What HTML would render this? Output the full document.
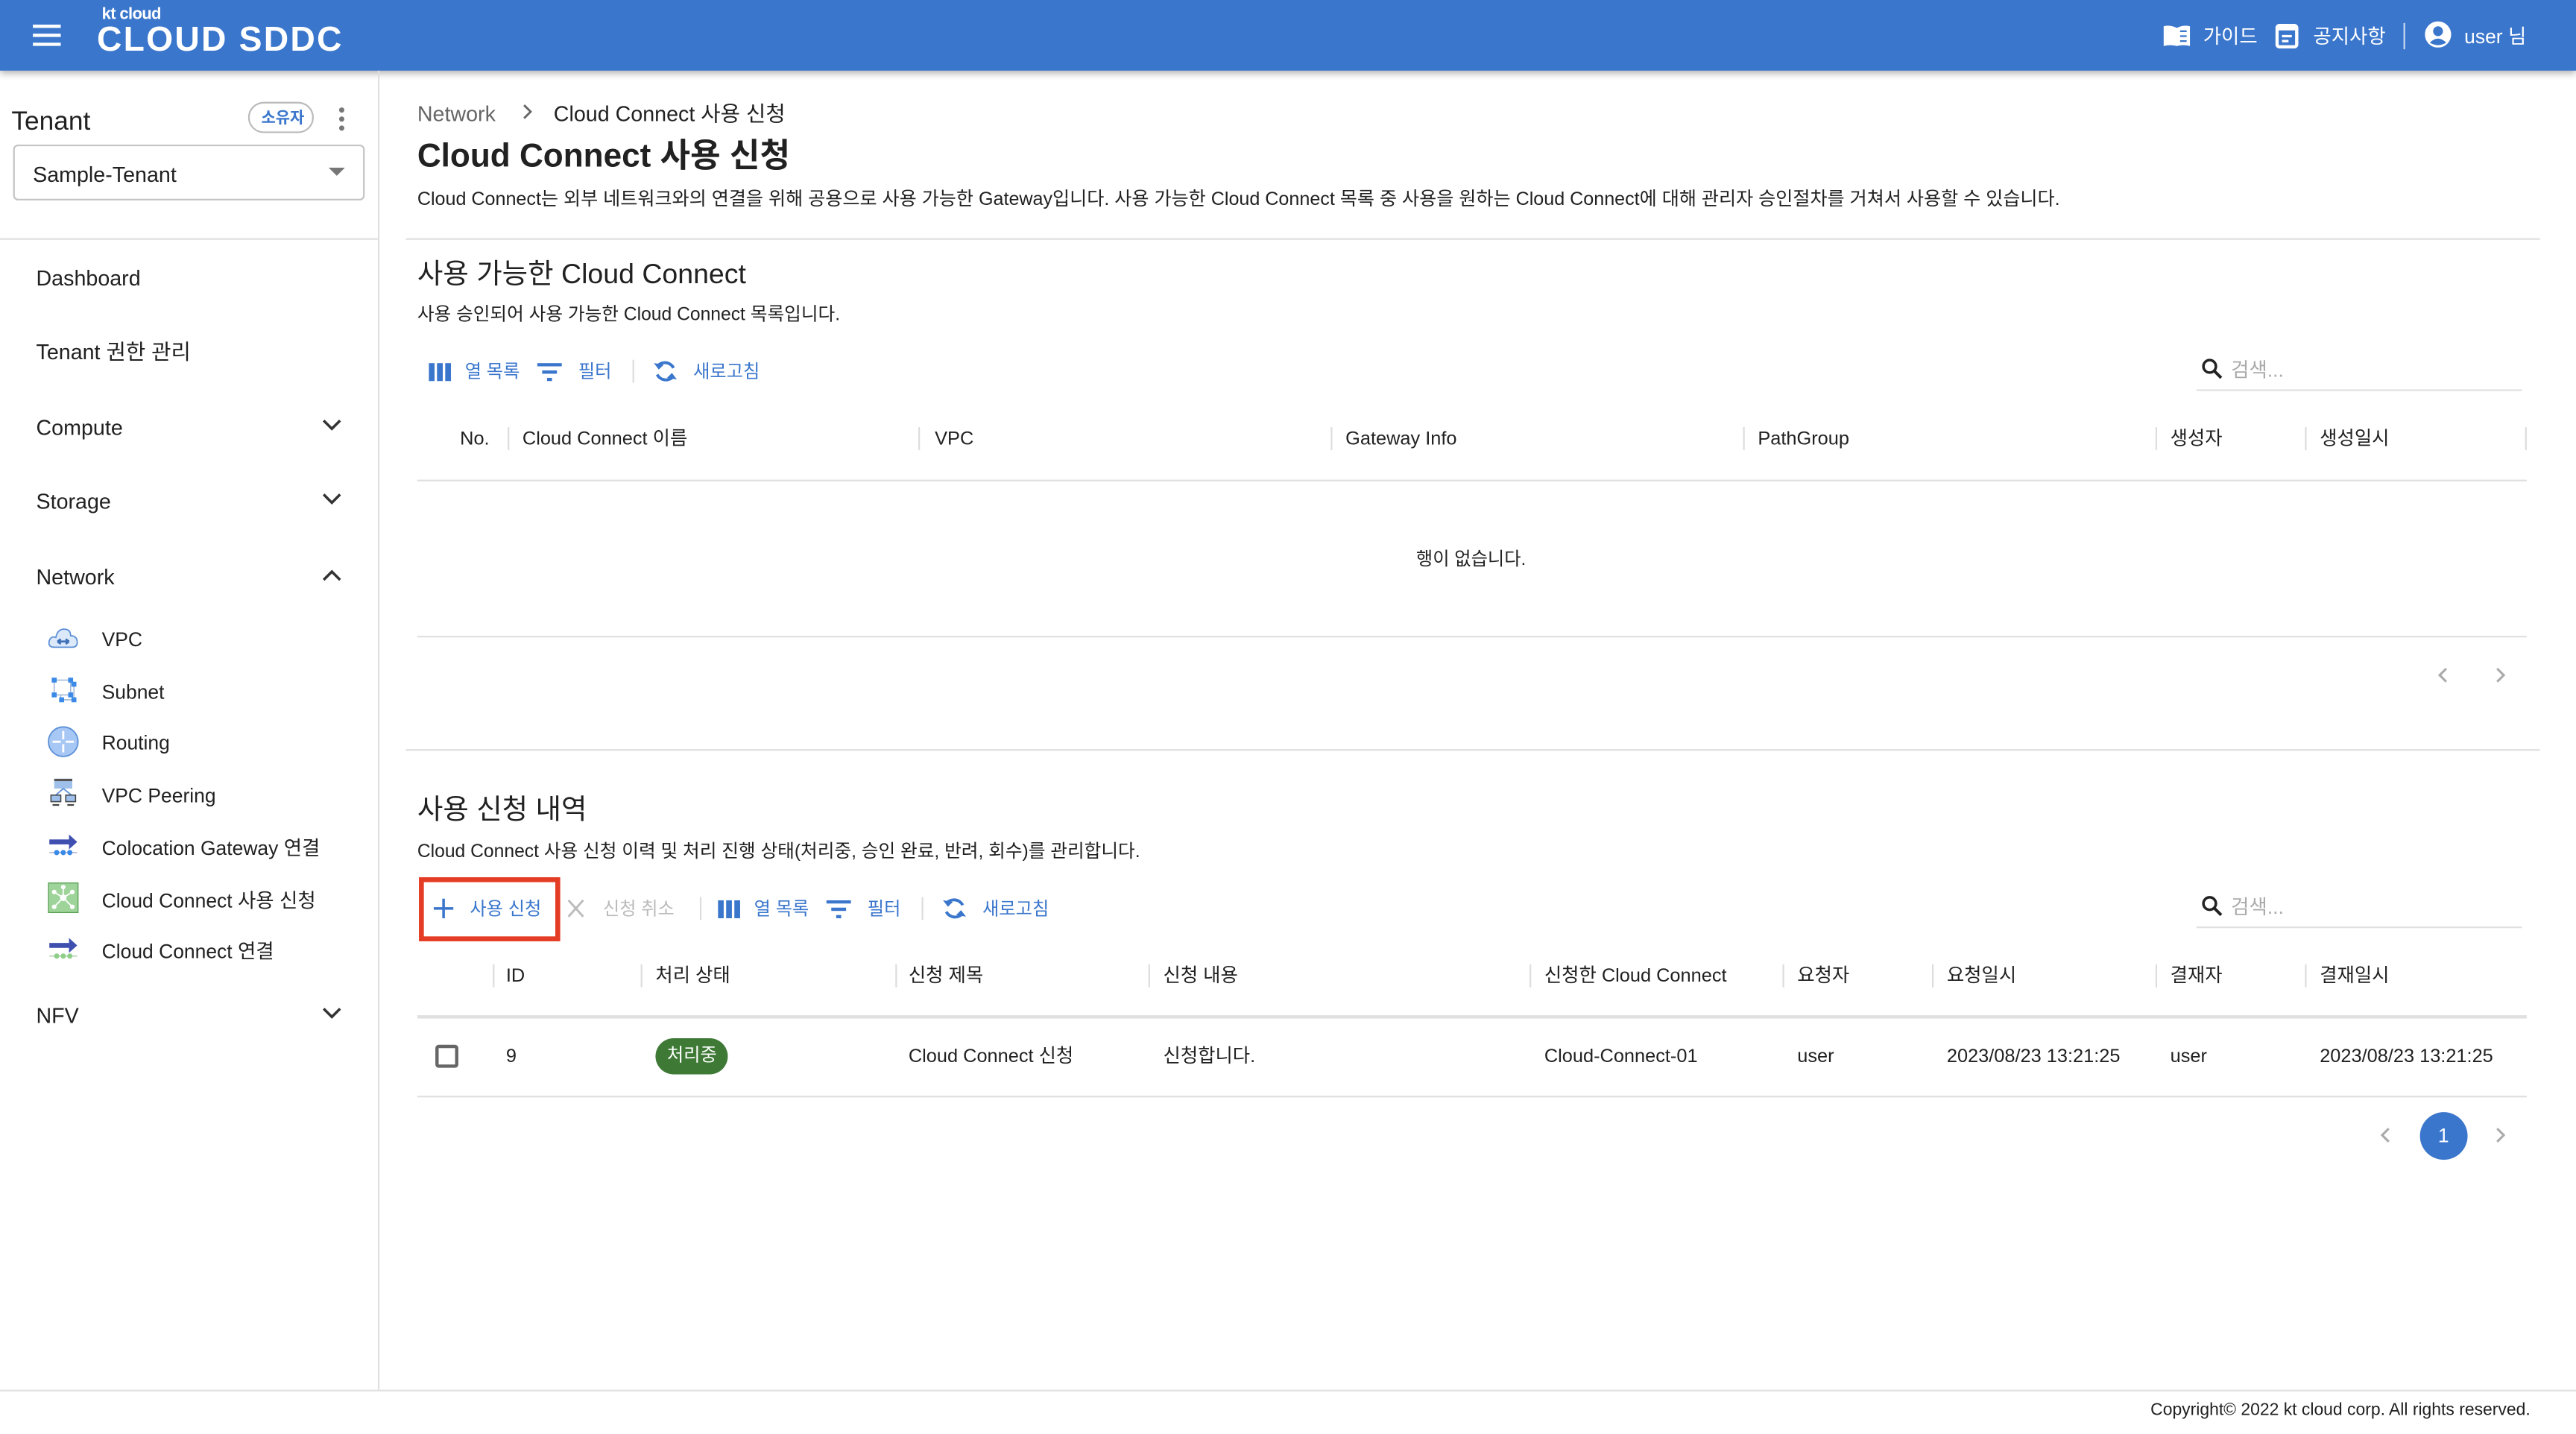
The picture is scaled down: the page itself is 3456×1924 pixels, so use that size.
<!DOCTYPE html>
<html><head><meta charset="utf-8">
<style>
html,body{margin:0;padding:0;background:#fff;overflow:hidden;width:3456px;height:1924px}
#r{position:absolute;left:0;top:0;width:1568px;height:873px;transform:scale(2.2041);transform-origin:0 0;font-family:"Liberation Sans","Noto Sans CJK KR",sans-serif;color:#212121}
.t{position:absolute;white-space:nowrap;transform:translateY(calc(-50% + 1.5px));line-height:1.2}
.ln{position:absolute;background:#e0e0e0}
.b{color:#3a76cc}
.sep{position:absolute;width:1px;height:14px;background:#ddd}
svg{position:absolute}
</style></head><body><div id="r">
<!-- header -->
<div style="position:absolute;left:0;top:0;width:1568px;height:43px;background:#3a76cc;box-shadow:0 2px 4px rgba(0,0,0,.3)"></div>
<svg style="left:20px;top:15px" width="17" height="13"><rect y="0" width="17" height="2" fill="#fff"/><rect y="5.5" width="17" height="2" fill="#fff"/><rect y="11" width="17" height="2" fill="#fff"/></svg>
<div class="t" style="left:62px;top:8px;color:#fff;font-size:10px;font-weight:bold;letter-spacing:-.3px">kt cloud</div>
<div class="t" style="left:59px;top:23px;color:#fff;font-size:21px;font-weight:bold;letter-spacing:1px">CLOUD SDDC</div>
<svg style="left:1316px;top:14px" width="18" height="15"><path d="M1 2 Q5 1 9 3 Q13 1 17 2 V14 Q13 13 9 14 Q5 13 1 14Z" fill="#fff"/><path d="M11 5h4M11 8h4M11 11h4" stroke="#3a76cc" stroke-width="1"/></svg>
<div class="t" style="left:1341px;top:21px;color:#fff;font-size:12px">가이드</div>
<svg style="left:1385px;top:13px" width="14" height="17"><rect x="1" y="2.5" width="12" height="13" rx="1.5" fill="none" stroke="#fff" stroke-width="2"/><rect x="1" y="2.5" width="12" height="3" fill="#fff"/><path d="M4 9h6M4 12h4" stroke="#fff" stroke-width="1.5"/></svg>
<div class="t" style="left:1408px;top:21px;color:#fff;font-size:12px">공지사항</div>
<div style="position:absolute;left:1463px;top:14px;width:1px;height:16px;background:#c9d8ef"></div>
<svg style="left:1476px;top:13px" width="16" height="16"><circle cx="8" cy="8" r="8" fill="#fff"/><circle cx="8" cy="6" r="3" fill="#3a76cc"/><path d="M3 13 Q8 8 13 13 Q8 16 3 13Z" fill="#3a76cc"/></svg>
<div class="t" style="left:1500px;top:21px;color:#fff;font-size:12px">user 님</div>
<!-- sidebar -->
<div style="position:absolute;left:230px;top:43px;width:1px;height:803px;background:#e0e0e0"></div>
<div class="t" style="left:7px;top:73px;font-size:16px;font-weight:500">Tenant</div>
<div style="position:absolute;left:151px;top:62px;width:40px;height:19px;border:1px solid #bbb;border-radius:10px;box-sizing:border-box"></div>
<div class="t b" style="left:159px;top:71px;font-size:9.5px;font-weight:bold">소유자</div>
<svg style="left:205px;top:65px" width="6" height="15"><circle cx="3" cy="2" r="1.6" fill="#777"/><circle cx="3" cy="7.5" r="1.6" fill="#777"/><circle cx="3" cy="13" r="1.6" fill="#777"/></svg>
<div style="position:absolute;left:8px;top:88px;width:214px;height:34px;border:1px solid #c4c4c4;border-radius:3px;box-sizing:border-box"></div>
<div class="t" style="left:20px;top:105px;font-size:13px">Sample-Tenant</div>
<svg style="left:200px;top:102px" width="10" height="6"><path d="M0 0h10L5 5z" fill="#777"/></svg>
<div class="ln" style="left:0;top:145px;width:230px;height:1px"></div>
<div class="t" style="left:22px;top:168px;font-size:13px">Dashboard</div>
<div class="t" style="left:22px;top:213px;font-size:13px">Tenant 권한 관리</div>
<div class="t" style="left:22px;top:259px;font-size:13px">Compute</div>
<div class="t" style="left:22px;top:304px;font-size:13px">Storage</div>
<div class="t" style="left:22px;top:350px;font-size:13px">Network</div>
<div class="t" style="left:22px;top:617px;font-size:13px">NFV</div>
<svg style="left:196px;top:255px" width="12" height="8"><path d="M1 1l5 5 5-5" fill="none" stroke="#333" stroke-width="1.6"/></svg>
<svg style="left:196px;top:300px" width="12" height="8"><path d="M1 1l5 5 5-5" fill="none" stroke="#333" stroke-width="1.6"/></svg>
<svg style="left:196px;top:346px" width="12" height="8"><path d="M1 7l5-5 5 5" fill="none" stroke="#333" stroke-width="1.6"/></svg>
<svg style="left:196px;top:613px" width="12" height="8"><path d="M1 1l5 5 5-5" fill="none" stroke="#333" stroke-width="1.6"/></svg>
<svg style="left:29px;top:381px" width="19" height="14"><path d="M4 13 Q0 13 1 9 Q2 6 5 7 Q6 2 10 2 Q14 2 14 6 Q18 6 18 10 Q18 13 15 13Z" fill="#dbe9fa" stroke="#5b8fd6" stroke-width=".8"/><path d="M6 9.5h7M6 9.5l2-1.5M6 9.5l2 1.5M13 9.5l-2-1.5M13 9.5l-2 1.5" stroke="#3d6fb8" stroke-width="1.2"/></svg>
<svg style="left:30px;top:411px" width="17" height="17"><path d="M3 3h10v9H3zM7 12v3h8V5h-2" fill="none" stroke="#9db5d6" stroke-width=".7"/><g fill="#3b8ae8"><rect x="1.5" y="1.5" width="3" height="3"/><rect x="11.5" y="1.5" width="3" height="3"/><rect x="1.5" y="10.5" width="3" height="3"/><rect x="11.5" y="10.5" width="3" height="3"/><rect x="6" y="13.5" width="3" height="3"/><rect x="13.5" y="13.5" width="3" height="3"/><rect x="13.5" y="4" width="3" height="3"/></g></svg>
<svg style="left:29px;top:442px" width="19" height="19"><circle cx="9.5" cy="9.5" r="9" fill="#a7c7f5" stroke="#5b8fd6" stroke-width=".8"/><path d="M9.5 3v5M9.5 11v5M3 9.5h5M11 9.5h5" stroke="#fff" stroke-width="1.3"/></svg>
<svg style="left:30px;top:474px" width="18" height="18"><rect x="3" y="0" width="11" height="6" fill="#9ec0ea"/><rect x="3" y="0" width="11" height="1.5" fill="#555"/><path d="M8.5 6L4 10M8.5 6l5 4" stroke="#5b8fd6" stroke-width=".8"/><rect x="1" y="10" width="6" height="4" fill="#9ec0ea" stroke="#444" stroke-width=".7"/><rect x="10" y="10" width="6" height="4" fill="#9ec0ea" stroke="#444" stroke-width=".7"/><path d="M2 16h4M11 16h4" stroke="#444"/></svg>
<svg style="left:30px;top:507px" width="18" height="16"><rect x="0" y="4" width="13" height="3" fill="#3f4fb0"/><path d="M12 1l5 4.5-5 4.5z" fill="#3f4fb0"/><path d="M0 12h17" stroke="#aac" stroke-width=".6"/><circle cx="4.5" cy="12" r="1.6" fill="#3b8ae8"/><circle cx="8.5" cy="12" r="1.6" fill="#3b8ae8"/><circle cx="12.5" cy="12" r="1.6" fill="#3b8ae8"/></svg>
<svg style="left:29px;top:537px" width="19" height="19"><rect x=".5" y=".5" width="18" height="18" fill="#9ed49a" stroke="#5aa055" stroke-width=".6"/><path d="M9.5 9.5L9.5 3M9.5 9.5L4 6M9.5 9.5L15 6M9.5 9.5L4 15M9.5 9.5L15 15" stroke="#fff" stroke-width=".8"/><g fill="#fff"><circle cx="9.5" cy="9.5" r="2"/><circle cx="9.5" cy="3" r="1.4"/><circle cx="4" cy="6" r="1.4"/><circle cx="15" cy="6" r="1.4"/><circle cx="4" cy="15" r="1.4"/><circle cx="15" cy="15" r="1.4"/></g></svg>
<svg style="left:30px;top:570px" width="18" height="16"><rect x="0" y="4" width="13" height="3" fill="#3f4fb0"/><path d="M12 1l5 4.5-5 4.5z" fill="#3f4fb0"/><path d="M0 12h17" stroke="#aca" stroke-width=".6"/><circle cx="4.5" cy="12" r="1.6" fill="#8fcf8a"/><circle cx="8.5" cy="12" r="1.6" fill="#8fcf8a"/><circle cx="12.5" cy="12" r="1.6" fill="#8fcf8a"/></svg>
<div class="t" style="left:62px;top:388px;font-size:12px">VPC</div>
<div class="t" style="left:62px;top:420px;font-size:12px">Subnet</div>
<div class="t" style="left:62px;top:451px;font-size:12px">Routing</div>
<div class="t" style="left:62px;top:483px;font-size:12px">VPC Peering</div>
<div class="t" style="left:62px;top:515px;font-size:12px">Colocation Gateway 연결</div>
<div class="t" style="left:62px;top:547px;font-size:12px">Cloud Connect 사용 신청</div>
<div class="t" style="left:62px;top:578px;font-size:12px">Cloud Connect 연결</div>
<!-- main -->
<div class="t" style="left:254px;top:68px;font-size:13px;color:#666">Network</div>
<svg style="left:318px;top:63px" width="7" height="10"><path d="M1 1l4 4-4 4" fill="none" stroke="#666" stroke-width="1.3"/></svg>
<div class="t" style="left:337px;top:68px;font-size:13px">Cloud Connect 사용 신청</div>
<div class="t" style="left:254px;top:94px;font-size:20px;font-weight:bold">Cloud Connect 사용 신청</div>
<div class="t" style="left:254px;top:121px;font-size:11.4px">Cloud Connect는 외부 네트워크와의 연결을 위해 공용으로 사용 가능한 Gateway입니다. 사용 가능한 Cloud Connect 목록 중 사용을 원하는 Cloud Connect에 대해 관리자 승인절차를 거쳐서 사용할 수 있습니다.</div>
<div class="ln" style="left:247px;top:145px;width:1299px;height:1px"></div>
<div class="t" style="left:254px;top:166px;font-size:17px">사용 가능한 Cloud Connect</div>
<div class="t" style="left:254px;top:191px;font-size:11.2px">사용 승인되어 사용 가능한 Cloud Connect 목록입니다.</div>
<!-- toolbar 1 -->
<svg style="left:261px;top:221px" width="14" height="11"><rect x="0" width="3.5" height="11" fill="#3a76cc"/><rect x="5" width="3.5" height="11" fill="#3a76cc"/><rect x="10" width="3.5" height="11" fill="#3a76cc"/></svg>
<div class="t b" style="left:283px;top:226px;font-size:11px">열 목록</div>
<svg style="left:327px;top:221px" width="15" height="11"><rect x="0" y="0" width="15" height="2" fill="#3a76cc"/><rect x="3" y="4.5" width="9" height="2" fill="#3a76cc"/><rect x="6" y="9" width="3" height="2" fill="#3a76cc"/></svg>
<div class="t b" style="left:352px;top:226px;font-size:11px">필터</div>
<div class="sep" style="left:385px;top:219px"></div>
<svg style="left:397px;top:218px" width="16" height="16"><path d="M13 6A6 6 0 0 0 3 5M3 10a6 6 0 0 0 10 1" fill="none" stroke="#3a76cc" stroke-width="1.8"/><path d="M1 3l3 4 3-3z M15 13l-3-4-3 3z" fill="#3a76cc"/></svg>
<div class="t b" style="left:422px;top:226px;font-size:11px">새로고침</div>
<svg style="left:1340px;top:218px" width="13" height="13"><circle cx="5" cy="5" r="3.8" fill="none" stroke="#222" stroke-width="1.6"/><path d="M8 8l4 4" stroke="#222" stroke-width="1.8"/></svg>
<div class="t" style="left:1358px;top:224px;font-size:12px;color:#aaa">검색...</div>
<div class="ln" style="left:1337px;top:237px;width:198px;height:1px"></div>
<!-- table 1 -->
<div class="t" style="left:280px;top:267px;font-size:11.5px">No.</div>
<div class="t" style="left:318px;top:267px;font-size:11.5px">Cloud Connect 이름</div>
<div class="t" style="left:569px;top:267px;font-size:11.5px">VPC</div>
<div class="t" style="left:819px;top:267px;font-size:11.5px">Gateway Info</div>
<div class="t" style="left:1070px;top:267px;font-size:11.5px">PathGroup</div>
<div class="t" style="left:1321px;top:267px;font-size:11.5px">생성자</div>
<div class="t" style="left:1412px;top:267px;font-size:11.5px">생성일시</div>
<div class="sep" style="left:309px;top:260px"></div><div class="sep" style="left:559px;top:260px"></div><div class="sep" style="left:810px;top:260px"></div><div class="sep" style="left:1061px;top:260px"></div><div class="sep" style="left:1312px;top:260px"></div><div class="sep" style="left:1403px;top:260px"></div><div class="sep" style="left:1537px;top:260px"></div>
<div class="ln" style="left:254px;top:292px;width:1284px;height:1px"></div>
<div class="t" style="left:862px;top:340px;font-size:11px">행이 없습니다.</div>
<div class="ln" style="left:254px;top:387px;width:1284px;height:1px"></div>
<svg style="left:1484px;top:406px" width="7" height="10"><path d="M5 1L1 5l4 4" fill="none" stroke="#aaa" stroke-width="1.4"/></svg>
<svg style="left:1518px;top:406px" width="7" height="10"><path d="M2 1l4 4-4 4" fill="none" stroke="#aaa" stroke-width="1.4"/></svg>
<div class="ln" style="left:247px;top:456px;width:1299px;height:1px"></div>
<!-- section 2 -->
<div class="t" style="left:254px;top:492px;font-size:17px">사용 신청 내역</div>
<div class="t" style="left:254px;top:518px;font-size:11.2px">Cloud Connect 사용 신청 이력 및 처리 진행 상태(처리중, 승인 완료, 반려, 회수)를 관리합니다.</div>
<div style="position:absolute;left:255px;top:534px;width:86px;height:39px;border:3px solid #e53c25;box-sizing:border-box"></div>
<svg style="left:264px;top:547px" width="12" height="12"><path d="M6 0v12M0 6h12" stroke="#3a76cc" stroke-width="1.6"/></svg>
<div class="t b" style="left:286px;top:553px;font-size:11px">사용 신청</div>
<svg style="left:345px;top:547px" width="11" height="12"><path d="M1 1l9 10M10 1L1 11" stroke="#bbb" stroke-width="1.3"/></svg>
<div class="t" style="left:367px;top:553px;font-size:11px;color:#bbb">신청 취소</div>
<div class="sep" style="left:426px;top:546px"></div>
<svg style="left:437px;top:548px" width="14" height="11"><rect x="0" width="3.5" height="11" fill="#3a76cc"/><rect x="5" width="3.5" height="11" fill="#3a76cc"/><rect x="10" width="3.5" height="11" fill="#3a76cc"/></svg>
<div class="t b" style="left:459px;top:553px;font-size:11px">열 목록</div>
<svg style="left:503px;top:548px" width="15" height="11"><rect x="0" y="0" width="15" height="2" fill="#3a76cc"/><rect x="3" y="4.5" width="9" height="2" fill="#3a76cc"/><rect x="6" y="9" width="3" height="2" fill="#3a76cc"/></svg>
<div class="t b" style="left:528px;top:553px;font-size:11px">필터</div>
<div class="sep" style="left:561px;top:546px"></div>
<svg style="left:573px;top:545px" width="16" height="16"><path d="M13 6A6 6 0 0 0 3 5M3 10a6 6 0 0 0 10 1" fill="none" stroke="#3a76cc" stroke-width="1.8"/><path d="M1 3l3 4 3-3z M15 13l-3-4-3 3z" fill="#3a76cc"/></svg>
<div class="t b" style="left:598px;top:553px;font-size:11px">새로고침</div>
<svg style="left:1340px;top:545px" width="13" height="13"><circle cx="5" cy="5" r="3.8" fill="none" stroke="#222" stroke-width="1.6"/><path d="M8 8l4 4" stroke="#222" stroke-width="1.8"/></svg>
<div class="t" style="left:1358px;top:551px;font-size:12px;color:#aaa">검색...</div>
<div class="ln" style="left:1337px;top:564px;width:198px;height:1px"></div>
<!-- table 2 -->
<div class="sep" style="left:300px;top:587px"></div><div class="sep" style="left:390px;top:587px"></div><div class="sep" style="left:545px;top:587px"></div><div class="sep" style="left:699px;top:587px"></div><div class="sep" style="left:931px;top:587px"></div><div class="sep" style="left:1085px;top:587px"></div><div class="sep" style="left:1176px;top:587px"></div><div class="sep" style="left:1312px;top:587px"></div><div class="sep" style="left:1403px;top:587px"></div>
<div class="t" style="left:308px;top:594px;font-size:11.5px">ID</div>
<div class="t" style="left:399px;top:594px;font-size:11.5px">처리 상태</div>
<div class="t" style="left:553px;top:594px;font-size:11.5px">신청 제목</div>
<div class="t" style="left:708px;top:594px;font-size:11.5px">신청 내용</div>
<div class="t" style="left:940px;top:594px;font-size:11.5px">신청한 Cloud Connect</div>
<div class="t" style="left:1094px;top:594px;font-size:11.5px">요청자</div>
<div class="t" style="left:1185px;top:594px;font-size:11.5px">요청일시</div>
<div class="t" style="left:1321px;top:594px;font-size:11.5px">결재자</div>
<div class="t" style="left:1412px;top:594px;font-size:11.5px">결재일시</div>
<div class="ln" style="left:254px;top:618px;width:1284px;height:1.5px"></div>
<div style="position:absolute;left:265px;top:636px;width:14px;height:14px;border:2px solid #666;border-radius:2px;box-sizing:border-box"></div>
<div class="t" style="left:308px;top:643px;font-size:11.5px">9</div>
<div style="position:absolute;left:399px;top:632px;width:44px;height:22px;border-radius:11px;background:#3e7a36"></div>
<div class="t" style="left:406px;top:642px;font-size:11px;color:#fff">처리중</div>
<div class="t" style="left:553px;top:643px;font-size:11.5px">Cloud Connect 신청</div>
<div class="t" style="left:708px;top:643px;font-size:11.5px">신청합니다.</div>
<div class="t" style="left:940px;top:643px;font-size:11.5px">Cloud-Connect-01</div>
<div class="t" style="left:1094px;top:643px;font-size:11.5px">user</div>
<div class="t" style="left:1185px;top:643px;font-size:11.5px">2023/08/23 13:21:25</div>
<div class="t" style="left:1321px;top:643px;font-size:11.5px">user</div>
<div class="t" style="left:1412px;top:643px;font-size:11.5px">2023/08/23 13:21:25</div>
<div class="ln" style="left:254px;top:667px;width:1284px;height:1px"></div>
<svg style="left:1449px;top:686px" width="7" height="10"><path d="M5 1L1 5l4 4" fill="none" stroke="#aaa" stroke-width="1.4"/></svg>
<div style="position:absolute;left:1473px;top:677px;width:29px;height:29px;border-radius:50%;background:#3a76cc"></div>
<div class="t" style="left:1484px;top:690px;font-size:12px;color:#fff">1</div>
<svg style="left:1518px;top:686px" width="7" height="10"><path d="M2 1l4 4-4 4" fill="none" stroke="#aaa" stroke-width="1.4"/></svg>
<!-- footer -->
<div class="ln" style="left:0;top:846px;width:1568px;height:1px"></div>
<div class="t" style="left:1309px;top:858px;font-size:10.4px">Copyright© 2022 kt cloud corp. All rights reserved.</div>
</div></body></html>
